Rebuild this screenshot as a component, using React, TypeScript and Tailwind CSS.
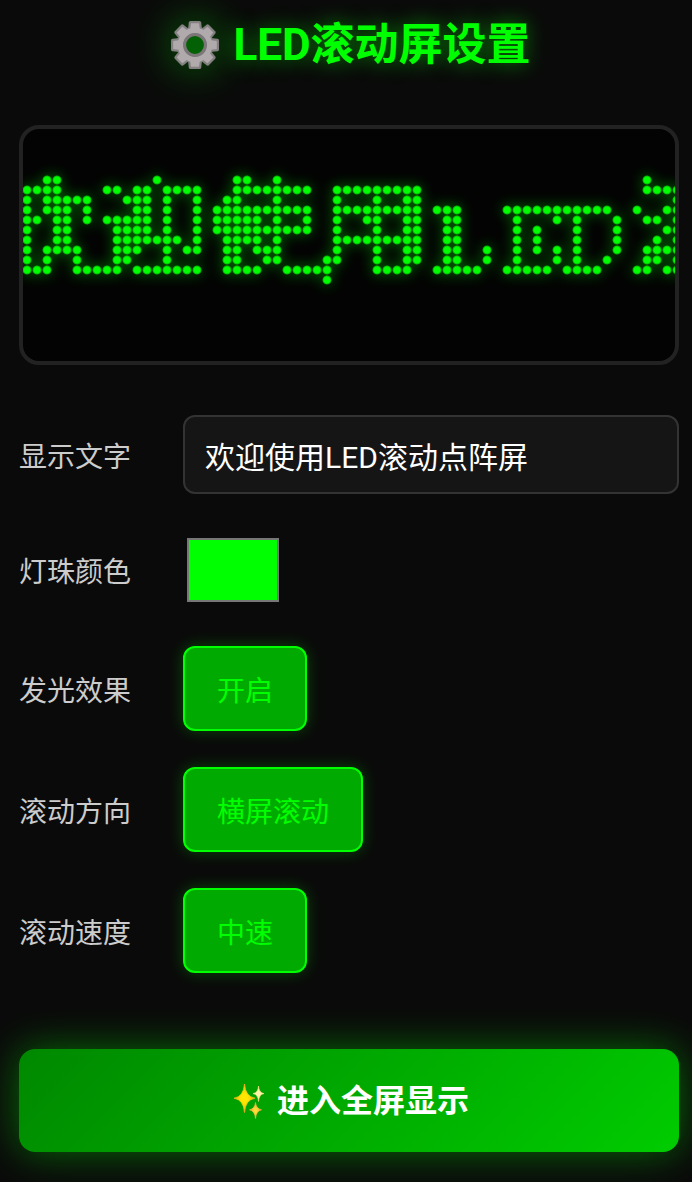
import React, { useState } from "react";

interface RowProps {
  label: string;
  htmlFor: string;
  children: React.ReactNode;
}

interface OptionButtonProps {
  id: string;
  text: string;
  onClick: () => void;
}

const DOT_PITCH = 10;
const DOT_RADIUS = 4;

// lit columns of every matrix row, as [first, last]
const LIT: number[][][] = [
  [[2, 3], [13, 13], [21, 22], [25, 25], [62, 62]],
  [[0, 3], [8, 9], [11, 12], [14, 17], [21, 28], [31, 39], [62, 65]],
  [[0, 0], [2, 6], [10, 12], [14, 14], [17, 17], [20, 21], [25, 25], [31, 31], [35, 35], [38, 39], [65, 65]],
  [[0, 0], [2, 4], [6, 6], [11, 12], [14, 14], [17, 17], [19, 28], [31, 39], [41, 43], [48, 58], [61, 61], [64, 65]],
  [[0, 1], [3, 4], [6, 6], [8, 12], [14, 14], [17, 17], [19, 23], [25, 25], [28, 28], [31, 31], [34, 35], [38, 39], [42, 43], [49, 49], [53, 53], [55, 55], [59, 59], [62, 63], [65, 65]],
  [[0, 0], [3, 4], [9, 12], [14, 14], [17, 17], [19, 28], [31, 31], [35, 35], [38, 39], [42, 43], [49, 49], [51, 51], [55, 55], [59, 59], [64, 65]],
  [[0, 0], [3, 4], [9, 15], [17, 17], [20, 23], [25, 25], [31, 39], [42, 43], [49, 49], [51, 51], [55, 55], [59, 59], [63, 63], [65, 65]],
  [[0, 0], [2, 5], [9, 11], [14, 14], [16, 17], [20, 21], [23, 25], [31, 31], [35, 35], [38, 39], [42, 43], [46, 46], [49, 49], [51, 51], [53, 53], [55, 55], [59, 59], [62, 65]],
  [[0, 0], [2, 2], [5, 5], [9, 10], [14, 14], [20, 21], [24, 25], [30, 31], [35, 35], [38, 39], [42, 43], [46, 46], [49, 49], [53, 53], [55, 55], [58, 58], [62, 63], [65, 65]],
  [[0, 2], [5, 9], [11, 17], [20, 23], [26, 30], [35, 38], [41, 45], [48, 52], [54, 57], [61, 62], [64, 65]],
  [[30, 30]],
];

const DOTS = LIT.flatMap((ranges, row) =>
  ranges.flatMap(([from, to]) =>
    Array.from({ length: to - from + 1 }, (_, i) => ({
      x: (from + i) * DOT_PITCH + 4,
      y: row * DOT_PITCH + 51,
    }))
  )
);

const TEETH = [0, 45, 90, 135, 180, 225, 270, 315];

const GearIcon: React.FC = () => (
  <svg
    viewBox="0 0 48 48"
    aria-hidden="true"
    className="mx-1 size-12 overflow-visible drop-shadow-[0_0_20px_#00ff0066]"
  >
    <circle cx="24" cy="24" r="10" fill="#046004" />
    <g fill="#858082">
      {TEETH.map((angle) => (
        <path
          key={angle}
          d="M17 9 17.800 1.500Q18 0 19.500 0h9Q30 0 30.200 1.500L31 9Z"
          transform={`rotate(${angle} 24 24)`}
        />
      ))}
    </g>
    <circle cx="24" cy="24" r="14" fill="none" stroke="#858082" strokeWidth="9" />
    <g fill="#b0aaad">
      {TEETH.map((angle) => (
        <path
          key={angle}
          d="M19 10 20 2.200h8L29 10Z"
          transform={`rotate(${angle} 24 24)`}
        />
      ))}
    </g>
    <circle cx="24" cy="24" r="14.5" fill="none" stroke="#b0aaad" strokeWidth="5.500" />
    <circle cx="24" cy="24" r="10.4" fill="none" stroke="#7b7678" strokeWidth="3" />
  </svg>
);

const SparklesIcon: React.FC = () => (
  <svg viewBox="0 0 32 36" aria-hidden="true" className="mx-1 h-9 w-8">
    <defs>
      <radialGradient id="spark-big">
        <stop offset="0.3" stopColor="#ffe600" />
        <stop offset="1" stopColor="#f2b01e" />
      </radialGradient>
      <radialGradient id="spark-small">
        <stop offset="0.2" stopColor="#ffdc38" />
        <stop offset="1" stopColor="#e8a33a" />
      </radialGradient>
    </defs>
    <path
      d="M11.500 1Q12.300 13.700 22 15.200Q12.300 16.700 11.500 29.500Q10.700 16.700 1 15.200Q10.700 13.700 11.500 1Z"
      fill="url(#spark-big)"
      stroke="url(#spark-big)"
      strokeWidth="0.8"
    />
    <path
      d="M25.500 3Q25.900 9.700 31 10.600Q25.900 11.500 25.500 18.500Q25.100 11.500 20 10.600Q25.100 9.700 25.500 3Z"
      fill="#fff3a8"
      stroke="#f6e08a"
      strokeWidth="0.600"
    />
    <path
      d="M22.500 19.500Q23 25.800 28.500 26.800Q23 27.800 22.500 35.500Q22 27.800 16.500 26.800Q22 25.800 22.500 19.500Z"
      fill="url(#spark-small)"
      stroke="url(#spark-small)"
      strokeWidth="0.800"
    />
  </svg>
);

const LedPreview: React.FC<{ color: string; glow: boolean }> = ({
  color,
  glow,
}) => (
  <div className="mb-[50px] h-60 overflow-hidden rounded-[20px] border-4 border-[#222] bg-[#030303]">
    <svg role="img" aria-label="LED" className="block h-full w-full">
      <defs>
        <filter id="led-glow" x="-10%" y="-40%" width="120%" height="180%">
          <feGaussianBlur stdDeviation="7" />
        </filter>
        <radialGradient id="led-dot">
          <stop offset="0" stopColor={color} />
          <stop offset="0.6" stopColor={color} />
          <stop offset="0.8" stopColor={color} stopOpacity="0.65" />
          <stop offset="1" stopColor={color} stopOpacity="0" />
        </radialGradient>
      </defs>
      {glow && (
        <g filter="url(#led-glow)" opacity="0.6">
          {DOTS.map(({ x, y }) => (
            <circle key={`${x}-${y}`} cx={x} cy={y} r={DOT_RADIUS} fill={color} />
          ))}
        </g>
      )}
      {DOTS.map(({ x, y }) => (
        <circle
          key={`${x}-${y}`}
          cx={x}
          cy={y}
          r={DOT_RADIUS + 1}
          fill="url(#led-dot)"
        />
      ))}
    </svg>
  </div>
);

const Row: React.FC<RowProps> = ({ label, htmlFor, children }) => (
  <div className="flex items-center">
    <label
      htmlFor={htmlFor}
      className="w-[164px] shrink-0 text-[28px] leading-[normal] text-[#ccc]"
    >
      {label}
    </label>
    {children}
  </div>
);

const OptionButton: React.FC<OptionButtonProps> = ({ id, text, onClick }) => (
  <button
    id={id}
    type="button"
    onClick={onClick}
    className="h-[85px] rounded-xl border-2 border-[#00ff00] bg-[#00aa00] px-8 text-[28px] leading-[normal] text-[#00ff00] shadow-[0_0_16px_#00ff0040]"
  >
    {text}
  </button>
);

const DIRECTIONS = ["横屏滚动", "竖屏滚动"];
const SPEEDS = ["慢速", "中速", "快速"];

const App: React.FC = () => {
  const [text, setText] = useState("欢迎使用LED滚动点阵屏");
  const [color, setColor] = useState("#00ff00");
  const [glow, setGlow] = useState(true);
  const [direction, setDirection] = useState(0);
  const [speed, setSpeed] = useState(1);

  return (
    <main
      lang="zh-CN"
      className="min-h-screen bg-[#0a0a0a] pt-3 pr-[13px] pb-[30px] pl-[19px] font-[Roboto,'Noto_Sans_CJK_SC',sans-serif]"
    >
      <h1 className="mb-12 flex h-[65px] items-center justify-center text-[44px] font-bold text-[#00ff00] text-shadow-[0_0_20px_#00ff0080]">
        <GearIcon />
        <span className="ml-2.5">LED滚动屏设置</span>
      </h1>

      <LedPreview color={color} glow={glow} />

      <div className="flex flex-col gap-9">
        <Row label="显示文字" htmlFor="text">
          <input
            id="text"
            type="text"
            value={text}
            onChange={(e) => setText(e.target.value)}
            className="h-[79px] min-w-0 flex-1 rounded-xl border-2 border-[#333] bg-[#151515] px-5 text-[30px] text-white outline-none"
          />
        </Row>
        <Row label="灯珠颜色" htmlFor="color">
          <input
            id="color"
            type="color"
            value={color}
            onChange={(e) => setColor(e.target.value)}
            className="h-20 w-[100px] appearance-none px-1 py-2 [&::-webkit-color-swatch]:rounded-none [&::-webkit-color-swatch]:border-2 [&::-webkit-color-swatch]:border-[#777] [&::-webkit-color-swatch-wrapper]:p-0"
          />
        </Row>
        <Row label="发光效果" htmlFor="glow">
          <OptionButton
            id="glow"
            text={glow ? "开启" : "关闭"}
            onClick={() => setGlow(!glow)}
          />
        </Row>
        <Row label="滚动方向" htmlFor="direction">
          <OptionButton
            id="direction"
            text={DIRECTIONS[direction]}
            onClick={() => setDirection((direction + 1) % DIRECTIONS.length)}
          />
        </Row>
        <Row label="滚动速度" htmlFor="speed">
          <OptionButton
            id="speed"
            text={SPEEDS[speed]}
            onClick={() => setSpeed((speed + 1) % SPEEDS.length)}
          />
        </Row>
      </div>

      <button
        type="button"
        className="mt-[76px] flex h-[103px] w-full items-center justify-center rounded-2xl bg-linear-[135deg,#008800,#00cc00] text-[32px] font-bold text-white shadow-[0_0_40px_#00ff0066]"
      >
        <SparklesIcon />
        <span className="ml-2">进入全屏显示</span>
      </button>
    </main>
  );
};

export default App;
